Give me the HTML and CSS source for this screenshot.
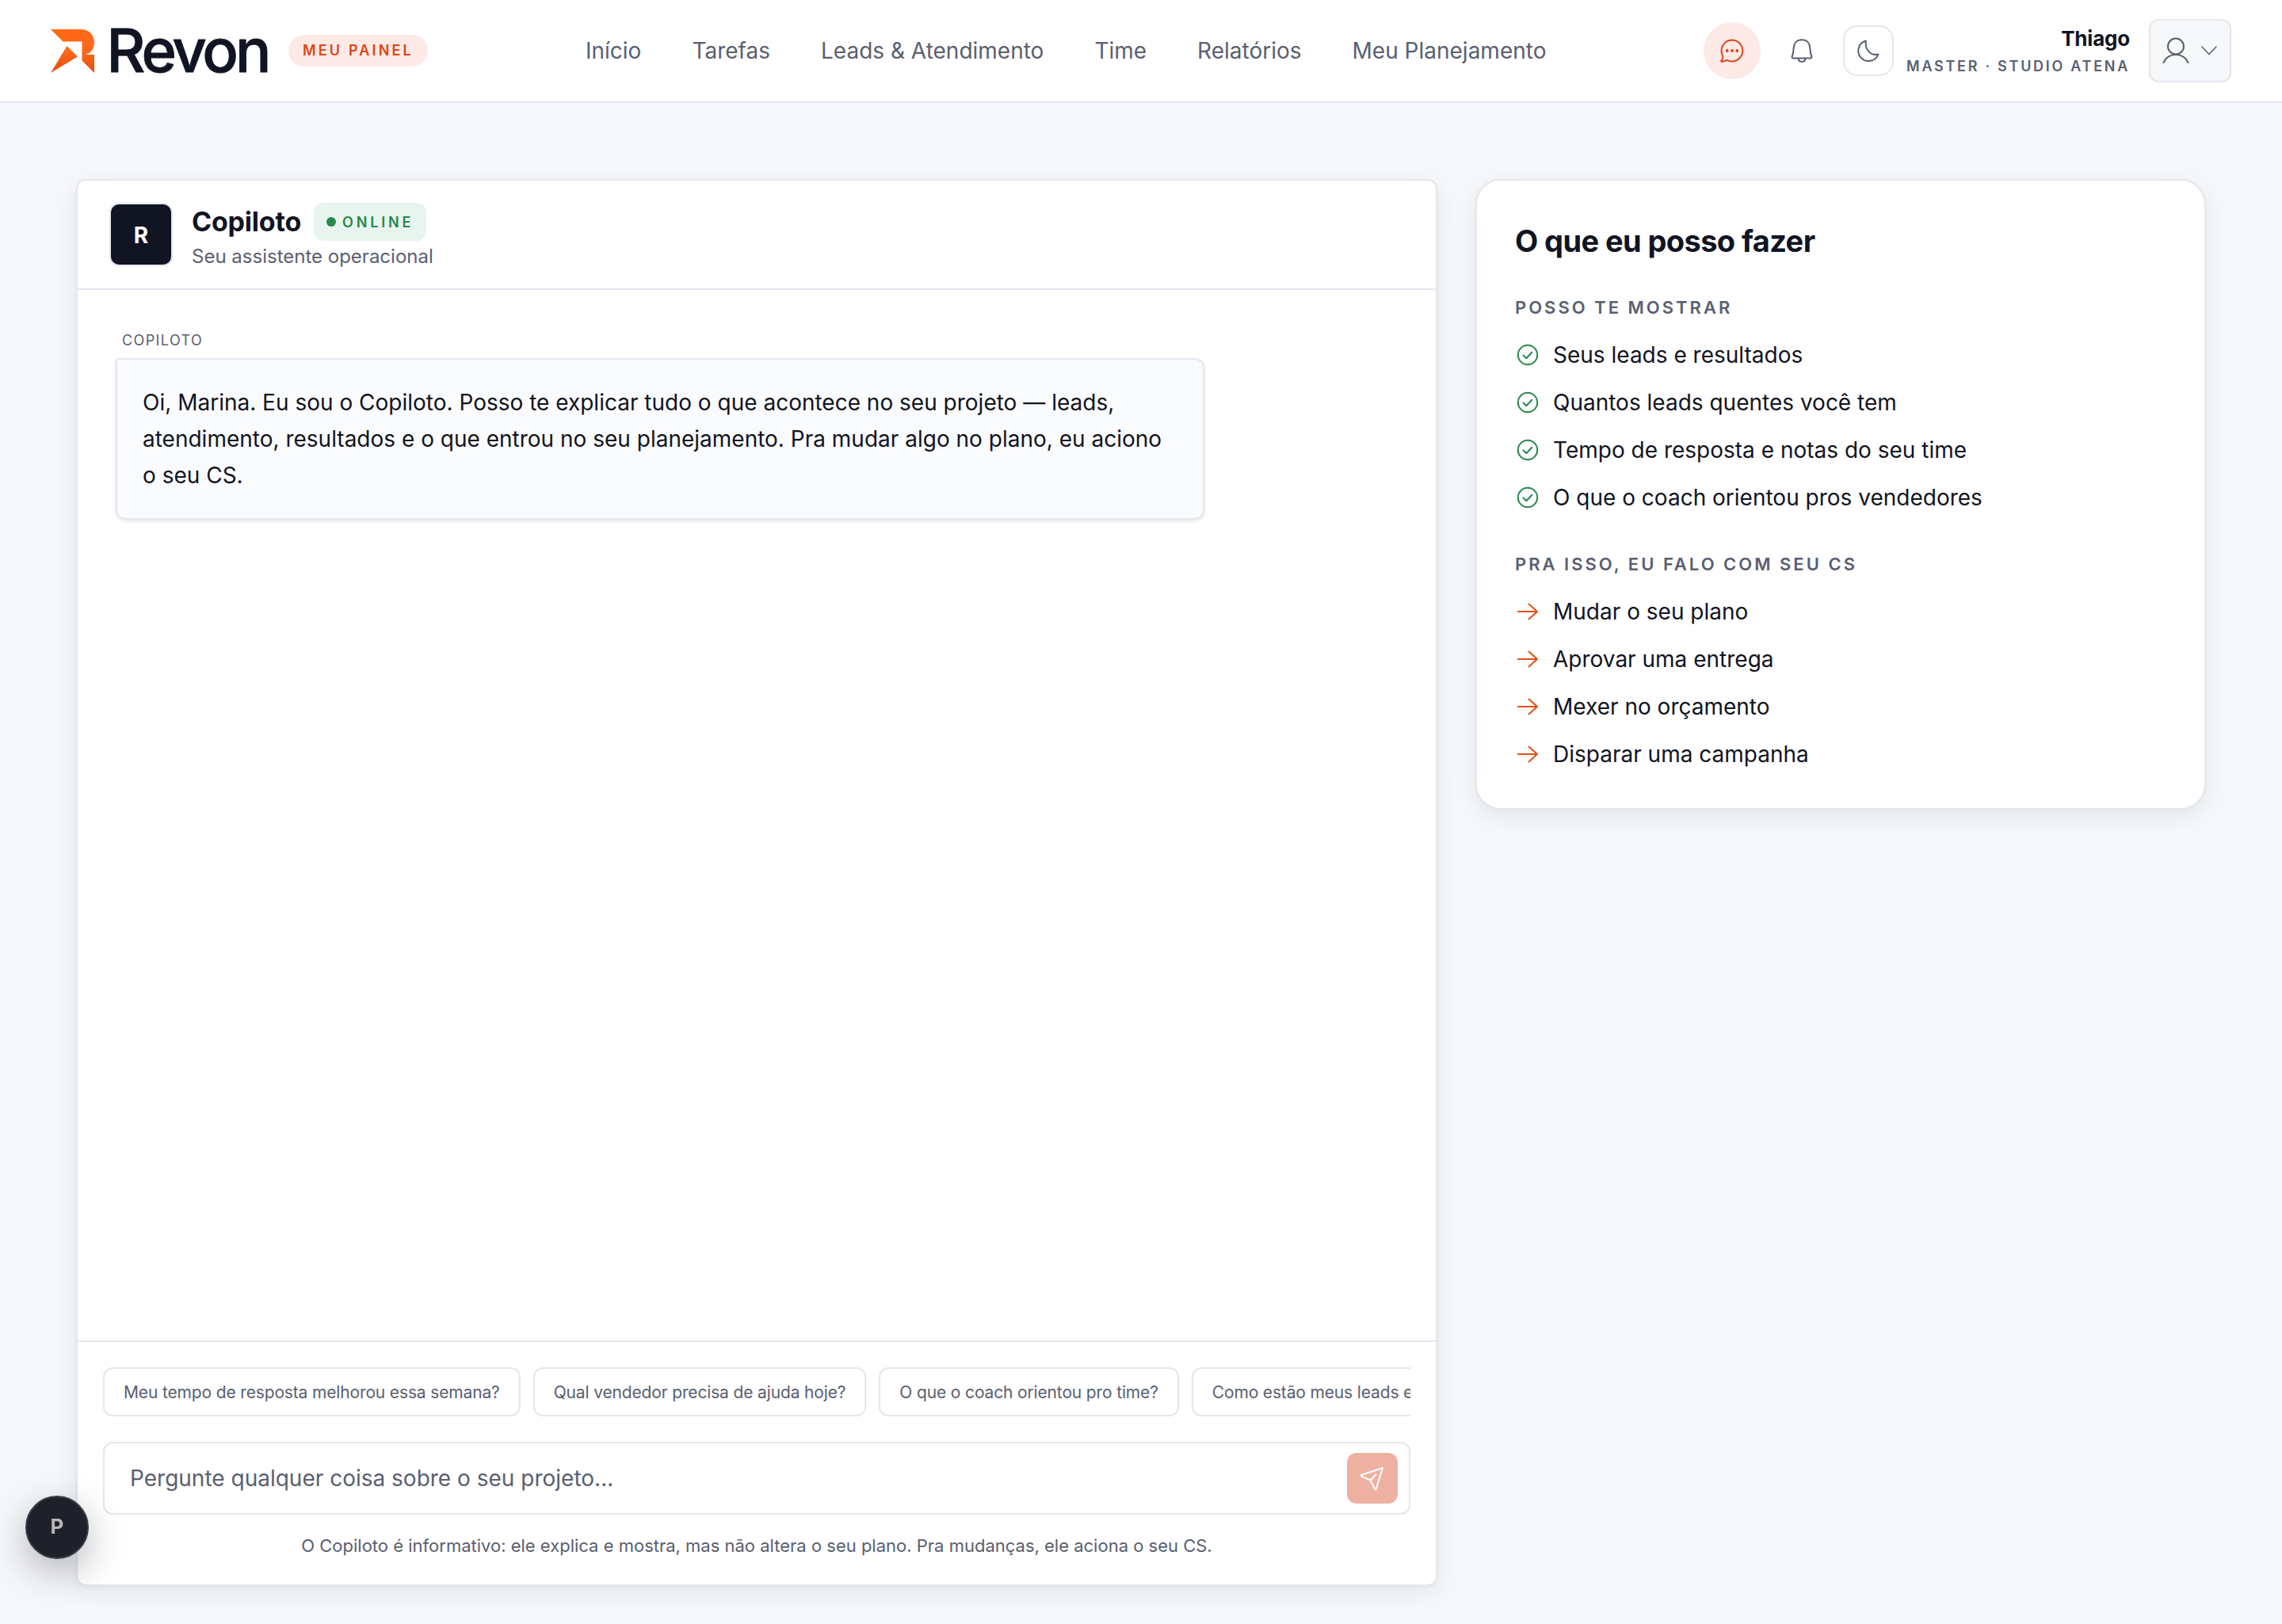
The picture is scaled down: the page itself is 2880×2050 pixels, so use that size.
FILE: index.html
```html
<!DOCTYPE html>
<html lang="pt-BR">
  <head>
    <meta charset="UTF-8" />
    <meta name="viewport" content="width=device-width, initial-scale=1.0" />
    <title>Revon - Copiloto</title>
    <link rel="stylesheet" href="styles.css">
  </head>
  <body>
    <header class="topbar">
      <div class="brand">
        <svg class="brand-mark" viewBox="0 0 55 55">
          <defs>
            <linearGradient id="flame" x1="0" y1="0" x2="0" y2="1">
              <stop offset="0.45" stop-color="#ff6a1a" />
              <stop offset="1" stop-color="#e64d12" />
            </linearGradient>
          </defs>
          <path fill="url(#flame)" d="M0 0H38C48 0 55 7 55 16.5C55 25 50 31 43 32H55V55L39.500 39.500V15.500H15.500ZM20.500 21L34 34.500L0 55Z" />
        </svg>
        <svg class="brand-name" viewBox="0 0 204 64">
          <text x="-2.500" y="59" textLength="208" lengthAdjust="spacing">Revon</text>
        </svg>
        <span class="panel-tag">MEU PAINEL</span>
      </div>

      <nav class="menu">
        <a>Início</a>
        <a>Tarefas</a>
        <a>Leads &amp; Atendimento</a>
        <a>Time</a>
        <a>Relatórios</a>
        <a>Meu Planejamento</a>
      </nav>

      <div class="actions">
        <button class="round-btn active">
          <svg class="icon" viewBox="0 0 32 32">
            <path d="M16 2.500A13.500 13.500 0 1 1 10 28.200C8.500 27.500 6 30 3 29.800C1.800 29.700 2 29 2.500 28.400C4.300 26.400 4.600 24.200 4 22A13.500 13.500 0 0 1 16 2.500Z" />
            <g class="dots"><circle cx="9.700" cy="16" r="1.900" /><circle cx="16" cy="16" r="1.900" /><circle cx="22.300" cy="16" r="1.900" /></g>
          </svg>
        </button>
        <button class="round-btn">
          <svg class="icon" viewBox="0 0 32 32">
            <path d="M16 2.300C9.500 2.300 6 6.500 5.700 12.500C5.500 17.500 5.200 19.500 3.800 23.200C3.300 24.600 3.600 25.400 5 25.400H27C28.400 25.400 28.700 24.600 28.200 23.200C26.800 19.500 26.500 17.500 26.300 12.500C26 6.500 22.500 2.300 16 2.300ZM11.500 25.600C12 31.300 20 31.300 20.500 25.600" />
          </svg>
        </button>
        <button class="theme-btn">
          <svg class="icon" viewBox="0 0 32 32">
            <path d="M12.800 3.500A13 13 0 1 0 28.500 20.500C19 23 11.300 14.500 12.800 3.500Z" />
          </svg>
        </button>
        <div class="who">
          <strong>Thiago</strong>
          <span>MASTER · STUDIO ATENA</span>
        </div>
        <button class="user-btn">
          <svg class="icon-user" viewBox="0 0 36 36">
            <circle cx="18" cy="12.500" r="10" />
            <path d="M2.500 33C8 19.500 28 19.500 33.500 33" />
          </svg>
          <svg class="icon-caret" viewBox="0 0 20 12"><path d="M1 1L10 10.500L19 1" /></svg>
        </button>
      </div>
    </header>

    <main class="layout">
      <section class="chat">
        <div class="chat-head">
          <div class="avatar">R</div>
          <div>
            <div class="chat-title">
              <h1>Copiloto</h1>
              <span class="status">ONLINE</span>
            </div>
            <p class="subtitle">Seu assistente operacional</p>
          </div>
        </div>

        <div class="messages">
          <span class="author">COPILOTO</span>
          <p class="bubble">Oi, Marina. Eu sou o Copiloto. Posso te explicar tudo o que acontece no seu projeto — leads, atendimento, resultados e o que entrou no seu planejamento. Pra mudar algo no plano, eu aciono o seu CS.</p>
        </div>

        <div class="composer">
          <div class="chips">
            <button>Meu tempo de resposta melhorou essa semana?</button>
            <button>Qual vendedor precisa de ajuda hoje?</button>
            <button>O que o coach orientou pro time?</button>
            <button>Como estão meus leads essa semana?</button>
          </div>
          <div class="ask">
            <input type="text" placeholder="Pergunte qualquer coisa sobre o seu projeto..." />
            <button class="send">
              <svg viewBox="0 0 32 32"><path d="M29 3L2.500 11.800C1.500 12.200 1.600 13.200 2.400 13.600L13.500 18.500L19 29.500C19.500 30.400 20.400 30.300 20.700 29.400L29 3ZM13.500 18.500L20.500 11.500" /></svg>
            </button>
          </div>
          <p class="note">O Copiloto é informativo: ele explica e mostra, mas não altera o seu plano. Pra mudanças, ele aciona o seu CS.</p>
        </div>
      </section>

      <aside class="help">
        <h2>O que eu posso fazer</h2>
        <h3>POSSO TE MOSTRAR</h3>
        <ul class="can">
          <li><svg viewBox="0 0 32 32"><circle cx="16" cy="16" r="12.200" /><path d="M10.500 16.500L14.300 20.200L21.300 12.800" /></svg>Seus leads e resultados</li>
          <li><svg viewBox="0 0 32 32"><circle cx="16" cy="16" r="12.200" /><path d="M10.500 16.500L14.300 20.200L21.300 12.800" /></svg>Quantos leads quentes você tem</li>
          <li><svg viewBox="0 0 32 32"><circle cx="16" cy="16" r="12.200" /><path d="M10.500 16.500L14.300 20.200L21.300 12.800" /></svg>Tempo de resposta e notas do seu time</li>
          <li><svg viewBox="0 0 32 32"><circle cx="16" cy="16" r="12.200" /><path d="M10.500 16.500L14.300 20.200L21.300 12.800" /></svg>O que o coach orientou pros vendedores</li>
        </ul>
        <h3>PRA ISSO, EU FALO COM SEU CS</h3>
        <ul class="ask-cs">
          <li><svg viewBox="0 0 32 32"><path d="M4 16H28M17.500 6.500L28 16L17.500 25.500" /></svg>Mudar o seu plano</li>
          <li><svg viewBox="0 0 32 32"><path d="M4 16H28M17.500 6.500L28 16L17.500 25.500" /></svg>Aprovar uma entrega</li>
          <li><svg viewBox="0 0 32 32"><path d="M4 16H28M17.500 6.500L28 16L17.500 25.500" /></svg>Mexer no orçamento</li>
          <li><svg viewBox="0 0 32 32"><path d="M4 16H28M17.500 6.500L28 16L17.500 25.500" /></svg>Disparar uma campanha</li>
        </ul>
      </aside>
    </main>

    <div class="floating">P</div>
  </body>
</html>
```
FILE: styles.css
```css
* {
  box-sizing: border-box;
  margin: 0;
  padding: 0;
}

body {
  min-height: 2050px;
  font-family: Inter, "Liberation Sans", sans-serif;
  font-size: 28px;
  background-color: #f7f8fa;
  color: #111422;
}

button,
input {
  font: inherit;
  color: inherit;
  border: none;
  background: none;
}

svg {
  display: block;
  flex: none;
  fill: none;
  stroke: currentColor;
  stroke-width: 2;
  stroke-linecap: round;
  stroke-linejoin: round;
}

/* Top bar */
.topbar {
  display: flex;
  align-items: center;
  justify-content: space-between;
  height: 130px;
  padding: 0 64px;
  background-color: #fff;
  border-bottom: 2px solid #e4e7ee;
}

.brand {
  display: flex;
  align-items: center;
  width: 675px;
}

.brand-mark {
  width: 55px;
  height: 55px;
  stroke: none;
}

.brand-name {
  width: 204px;
  height: 64px;
  margin-left: 18px;
  overflow: visible;
  fill: #111422;
  stroke: #111422;
  stroke-width: 0.8px;
  font-size: 75.6px;
  font-weight: 500;
}

.panel-tag {
  margin-left: 23px;
  padding: 0 18px;
  border-radius: 20px;
  background-color: #fdeae6;
  color: #dd4418;
  font-size: 18px;
  font-weight: 600;
  line-height: 40px;
  letter-spacing: 3.17px;
}

.menu {
  display: flex;
  flex: 1;
  gap: 64px;
  color: #596070;
}

.actions {
  display: flex;
  align-items: center;
  gap: 16px;
}

.round-btn,
.theme-btn {
  display: flex;
  align-items: center;
  justify-content: center;
  width: 72px;
  height: 72px;
  border-radius: 50%;
  color: #596070;
}

.round-btn.active {
  background-color: #fdeae6;
  color: #dd4418;
}

.theme-btn {
  width: 64px;
  height: 64px;
  border: 2px solid #e4e7ee;
  border-radius: 18px;
}

.icon {
  width: 32px;
  height: 32px;
}

.dots {
  fill: currentColor;
  stroke: none;
}

.who {
  display: flex;
  flex-direction: column;
  align-items: flex-end;
  padding-top: 4px;
}

.who strong {
  font-size: 26px;
  font-weight: 700;
  line-height: 34px;
  letter-spacing: -0.2px;
}

.who span {
  color: #596070;
  font-size: 18px;
  font-weight: 600;
  line-height: 35px;
  letter-spacing: 2.72px;
}

.user-btn {
  display: flex;
  align-items: center;
  gap: 14px;
  width: 104px;
  height: 80px;
  margin-left: 8px;
  padding-left: 14px;
  border: 2px solid #e4e7ee;
  border-radius: 12px;
  background-color: #f7f8fa;
  color: #596070;
}

.icon-user {
  width: 36px;
  height: 36px;
}

.icon-caret {
  width: 20px;
  height: 12px;
  stroke-width: 1.5;
}

/* Page */
.layout {
  display: grid;
  grid-template-columns: 1718px 922px;
  gap: 48px;
  align-items: start;
  padding: 96px 96px 48px;
}

.chat,
.help {
  border: 2px solid #e4e7ee;
  background-color: #fff;
  box-shadow: 0 8px 32px rgba(17, 20, 34, 0.08), 0 2px 4px rgba(17, 20, 34, 0.03);
}

.chat {
  display: flex;
  flex-direction: column;
  height: 1776px;
  border-radius: 12px;
}

.chat-head {
  display: flex;
  align-items: flex-start;
  gap: 24px;
  height: 138px;
  padding: 28px 40px 0;
  border-bottom: 2px solid #e4e7ee;
}

.avatar {
  width: 80px;
  height: 80px;
  border: 2px solid #e4e7ee;
  border-radius: 12px;
  background-color: #111422;
  color: #fff;
  font-weight: 700;
  line-height: 78px;
  text-align: center;
}

.chat-title {
  display: flex;
  align-items: center;
  gap: 16px;
}

h1 {
  font-size: 34px;
  font-weight: 700;
  line-height: 48px;
  letter-spacing: -0.2px;
}

.status {
  display: flex;
  align-items: center;
  gap: 8px;
  height: 48px;
  padding: 0 16px;
  border-radius: 12px;
  background-color: #e8f4ee;
  color: #26884b;
  font-size: 18px;
  font-weight: 600;
  letter-spacing: 3.8px;
}

.status::before {
  content: "";
  width: 12px;
  height: 12px;
  border-radius: 50%;
  background-color: #26884b;
}

.subtitle {
  color: #596070;
  font-size: 24px;
  line-height: 39px;
}

.messages {
  flex: 1;
  padding: 50px 48px;
}

.author {
  display: block;
  padding-left: 8px;
  color: #596070;
  font-size: 18px;
  line-height: 28px;
  letter-spacing: 1.4px;
}

.bubble {
  width: 1374px;
  margin-top: 8px;
  padding: 31px 32px;
  border: 2px solid #e4e7ee;
  border-radius: 4px 12px 12px 12px;
  background-color: #fafbfd;
  box-shadow: 0 2px 4px rgba(17, 20, 34, 0.1);
  line-height: 46px;
}

.composer {
  padding: 32px;
  border-top: 2px solid #e4e7ee;
}

.chips {
  display: flex;
  gap: 16px;
  overflow: hidden;
}

.chips button {
  flex: none;
  height: 62px;
  padding: 0 24px;
  border: 2px solid #e4e7ee;
  border-radius: 12px;
  color: #596070;
  font-size: 21px;
  letter-spacing: -0.15px;
}

.ask {
  display: flex;
  align-items: center;
  height: 92px;
  margin-top: 32px;
  padding: 0 14px 0 32px;
  border: 2px solid #e4e7ee;
  border-radius: 12px;
}

.ask input {
  flex: 1;
}

.ask input::placeholder {
  color: #596070;
}

.send {
  display: flex;
  align-items: center;
  justify-content: center;
  width: 64px;
  height: 64px;
  border-radius: 12px;
  background-color: #eeb1a1;
  color: #fff;
}

.send svg {
  width: 32px;
  height: 32px;
}

.note {
  margin-top: 22px;
  color: #596070;
  font-size: 22px;
  line-height: 34px;
  text-align: center;
}

/* Help card */
.help {
  height: 796px;
  padding: 48px;
  border-radius: 32px;
}

h2 {
  font-size: 38px;
  font-weight: 700;
  line-height: 57px;
  letter-spacing: -0.6px;
}

h3 {
  margin-top: 38px;
  color: #596070;
  font-size: 22px;
  font-weight: 600;
  line-height: 32px;
  letter-spacing: 3px;
}

h2 + h3 {
  margin-top: 39px;
}

ul {
  list-style: none;
  margin-top: 14px;
}

li {
  display: flex;
  align-items: center;
  gap: 16px;
  height: 60px;
}

li svg {
  width: 32px;
  height: 32px;
}

.can svg {
  color: #26884b;
}

.ask-cs svg {
  color: #e64d12;
}

/* Profile bubble over the chat card */
.floating {
  position: fixed;
  left: 32px;
  bottom: 82px;
  width: 80px;
  height: 80px;
  border: 2px solid #3a3d47;
  border-radius: 50%;
  background-color: #1e212a;
  box-shadow: 0 16px 48px rgba(17, 20, 34, 0.3);
  color: #b8b5b6;
  font-size: 26px;
  font-weight: 700;
  line-height: 74px;
  text-align: center;
}
```
